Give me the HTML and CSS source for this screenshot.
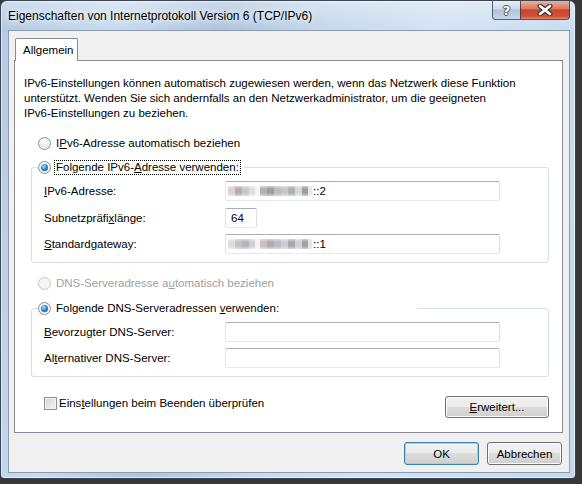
FILE: index.html
```html
<!DOCTYPE html>
<html lang="de">
<head>
  <meta charset="UTF-8">
  <title>Eigenschaften von Internetprotokoll Version 6 (TCP/IPv6)</title>
  <link rel="stylesheet" href="styles.css">
</head>
<body>
  <div class="window">
    <div class="titlebar">
      <span class="title">Eigenschaften von Internetprotokoll Version 6 (TCP/IPv6)</span>
      <div class="caption-buttons">
        <span class="cap-help">?</span>
        <span class="cap-close">
          <svg width="16" height="12" viewBox="0 0 16 12">
            <path d="M3 2 L13 10 M13 2 L3 10" stroke="#3b3b3b" stroke-width="5" stroke-linecap="round"/>
            <path d="M3 2 L13 10 M13 2 L3 10" stroke="#ffffff" stroke-width="2.6" stroke-linecap="round"/>
          </svg>
        </span>
      </div>
    </div>

    <div class="client">
      <div class="tabs">
        <span class="tab">Allgemein</span>
      </div>

      <div class="panel">
        <p class="intro">IPv6-Einstellungen können automatisch zugewiesen werden, wenn das Netzwerk diese Funktion<br>unterstützt. Wenden Sie sich andernfalls an den Netzwerkadministrator, um die geeigneten<br>IPv6-Einstellungen zu beziehen.</p>

        <div class="option option-first">
          <span class="radio"></span>
          <span>I<u>P</u>v6-Adresse automatisch beziehen</span>
        </div>

        <fieldset class="group group-ip">
          <legend class="option">
            <span class="radio checked"></span>
            <span class="focus">Folgende IPv6-<u>A</u>dresse verwenden:</span>
          </legend>
          <div class="fields">
            <span><u>I</u>Pv6-Adresse:</span>
            <span class="textbox wide"><span class="masked addr-a"></span>::2</span>
            <span>Subnetzpräfi<u>x</u>länge:</span>
            <span class="textbox short">64</span>
            <span><u>S</u>tandardgateway:</span>
            <span class="textbox wide"><span class="masked addr-b"></span>::1</span>
          </div>
        </fieldset>

        <div class="option option-disabled">
          <span class="radio disabled"></span>
          <span>DNS-Serveradresse a<u>u</u>tomatisch beziehen</span>
        </div>

        <fieldset class="group group-dns">
          <legend class="option">
            <span class="radio checked"></span>
            <span>Folgende DNS-Serveradressen <u>v</u>erwenden:</span>
          </legend>
          <div class="fields">
            <span><u>B</u>evorzugter DNS-Server:</span>
            <span class="textbox wide"></span>
            <span>Al<u>t</u>ernativer DNS-Server:</span>
            <span class="textbox wide"></span>
          </div>
        </fieldset>

        <div class="panel-footer">
          <span class="check-option">
            <span class="checkbox"></span>
            <span>Eins<u>t</u>ellungen beim Beenden überprüfen</span>
          </span>
          <button class="button advanced"><u>E</u>rweitert...</button>
        </div>
      </div>

      <div class="dialog-buttons">
        <button class="button default">OK</button>
        <button class="button">Abbrechen</button>
      </div>
    </div>
  </div>
</body>
</html>
```

FILE: styles.css
```css
* { box-sizing: border-box; }
body { margin: 0; background: #36383b; font-family: "Liberation Sans", Arial, sans-serif; font-size: 11.5px; color: #000; }
u { text-decoration: underline; text-underline-offset: 1px; }

/* fenster + glasrahmen */
.window {
  width: 576px; height: 479px;
  border: 1px solid #3a4656; border-radius: 7px 7px 4px 4px;
  padding: 0 5px 5px 7px;
  background:
    linear-gradient(180deg, rgba(255,255,255,0.35) 0, rgba(255,255,255,0) 28px),
    linear-gradient(100deg, #b3cae2 0%, #c8daee 18%, #aec5de 34%, #c5d8ec 50%, #d3e3f4 68%, #c3d8ee 100%);
  box-shadow: inset 0 0 0 1px rgba(255,255,255,0.55);
}
.titlebar { display: flex; height: 29px; margin: 0 -5px 0 -7px; padding-left: 7px; }
.title { font-size: 12px; line-height: 16px; margin-top: 7px; text-shadow: 0 0 6px #fff, 0 0 10px rgba(255,255,255,0.8); }
.caption-buttons { display: flex; margin-left: auto; margin-right: 5px; height: 19px; }
.cap-help, .cap-close { display: flex; align-items: center; justify-content: center; height: 19px; border: 1px solid rgba(40,52,70,0.75); border-top: none; }
.cap-help {
  width: 28px; border-right: none; border-radius: 0 0 0 4px;
  background: linear-gradient(#e6eef7, #cbd9e9 45%, #aec2d9 50%, #c6d7ea);
  font: bold 13px "DejaVu Sans", sans-serif; color: #fff;
  text-shadow: 1px 0 #4a5566, -1px 0 #4a5566, 0 1px #4a5566, 0 -1px #4a5566;
}
.cap-close {
  width: 50px; border-radius: 0 0 4px 0;
  background: linear-gradient(#eab0a2, #d97a64 42%, #c8452c 50%, #cf5237 85%, #e48a70);
}

/* client-bereich */
.client { height: 443px; border: 1px solid #8b9bb0; background: #f0f0f0; padding: 7px 6px 0 5px; }
.tabs { display: flex; height: 22px; }
.tab {
  position: relative; z-index: 1;
  margin-left: 1px; width: 63px; height: 23px;
  border: 1px solid #898c95; border-bottom: none; border-radius: 2px 2px 0 0;
  background: #fff; padding-left: 7px; line-height: 22px;
}
.panel { height: 373px; border: 1px solid #898c95; background: #fff; padding: 0 13px 0 0; }
.intro { margin: 15px 0 0 9px; line-height: 15px; white-space: nowrap; }

.option { display: flex; align-items: center; gap: 5px; height: 16px; white-space: nowrap; }
.option-first { margin: 14px 0 0 23px; }
.option-disabled { margin: 12px 0 0 23px; color: #a0a0a0; }
.radio {
  position: relative; flex: none; width: 13px; height: 13px; border-radius: 50%;
  border: 1px solid #8e8f8f;
  background: radial-gradient(circle at 50% 35%, #ffffff 0, #eeeeee 45%, #cfcfcf 100%);
  box-shadow: inset 0 0 0 1px #f6f6f6;
}
.radio.checked::after {
  content: ""; position: absolute; left: 2px; top: 2px; width: 7px; height: 7px; border-radius: 50%;
  background: radial-gradient(circle at 40% 35%, #a8e0ff 0, #2d8fd8 45%, #0c3f7e 100%);
}
.radio.disabled { border-color: #c9c9c9; background: #f4f4f4; box-shadow: none; }
.focus { border: 1px dotted #000; padding: 0 1px; margin-left: -1px; line-height: 13px; }

.group { margin: 8px 0 0 16px; width: 518px; min-width: 0; border: 1px solid #d5dfe5; border-radius: 3px; padding: 6px 0 8px 12px; }
.group legend { margin-left: -6px; padding: 0 3px 0 0; gap: 4px; }
.group-ip .fields { row-gap: 6.5px; }
.group-dns legend { width: 379px; gap: 5px; }
.group-dns { margin-top: 9px; }
.fields { display: grid; grid-template-columns: 181px auto; row-gap: 6px; align-items: center; }

.textbox {
  display: flex; align-items: center; height: 20px; background: #fff;
  border: 1px solid; border-color: #abadb3 #dbdfe6 #e3e9ef #e2e3ea; border-radius: 2px;
  padding-left: 2px;
}
.textbox.wide { width: 275px; }
.textbox.short { width: 32px; padding-left: 5px; }
.masked { width: 84px; height: 10px; margin-right: 1px; filter: blur(0.7px); }
.addr-a {
  background:
    linear-gradient(180deg, rgba(255,255,255,0.5), rgba(255,255,255,0) 30%, rgba(255,255,255,0) 70%, rgba(255,255,255,0.5)),
    linear-gradient(90deg, #d6d2d6 0 7px, #b8aab4 7px 14px, #c3c7cf 14px 21px, #dcdfe2 21px 27px, #f4f4f4 27px 32px,
      #b4b0b4 32px 39px, #a09ca4 39px 46px, #b8bcc4 46px 53px, #ccc4cc 53px 60px, #aeb0b8 60px 67px,
      #d8d8dc 67px 74px, #9a9ca4 74px 80px, #e6e6ea 80px 84px);
}
.addr-b {
  background:
    linear-gradient(180deg, rgba(255,255,255,0.5), rgba(255,255,255,0) 30%, rgba(255,255,255,0) 70%, rgba(255,255,255,0.5)),
    linear-gradient(90deg, #dcdcdc 0 7px, #c4c0c4 7px 14px, #b4b4bc 14px 21px, #cfd0d4 21px 27px, #f2f2f2 27px 32px,
      #c8c0b8 32px 39px, #b0acac 39px 46px, #bcb8c4 46px 53px, #c8ccd4 53px 60px, #a8a8b0 60px 67px,
      #d0d0d4 67px 74px, #a0a2aa 74px 80px, #e4e4e8 80px 84px);
}

.panel-footer { display: flex; justify-content: space-between; align-items: flex-start; margin: 19px 0 0 29px; }
.check-option { display: flex; align-items: center; gap: 2px; height: 13px; margin-top: 1px; line-height: 13px; }
.checkbox {
  width: 13px; height: 13px; border: 1px solid #8e8f8f;
  box-shadow: inset 0 0 0 1px #f4f4f4;
  background: linear-gradient(135deg, #cfd2d6, #f7f7f7);
}

/* knoepfe */
.button {
  height: 23px; padding: 0; border: 1px solid #707070; border-radius: 3px;
  font: inherit; color: #000;
  background: linear-gradient(#f2f2f2 0, #ebebeb 50%, #dddddd 50%, #cfcfcf 100%);
  box-shadow: inset 0 0 0 1px #fcfcfc;
}
.button.advanced { width: 104px; height: 22px; }
.button.default { border-color: #3c7fb1; box-shadow: inset 0 0 0 1px #8fd6f7; }
.dialog-buttons { display: flex; justify-content: flex-end; gap: 8px; margin-top: 9px; padding-right: 1px; }
.dialog-buttons .button { width: 75px; }
```
